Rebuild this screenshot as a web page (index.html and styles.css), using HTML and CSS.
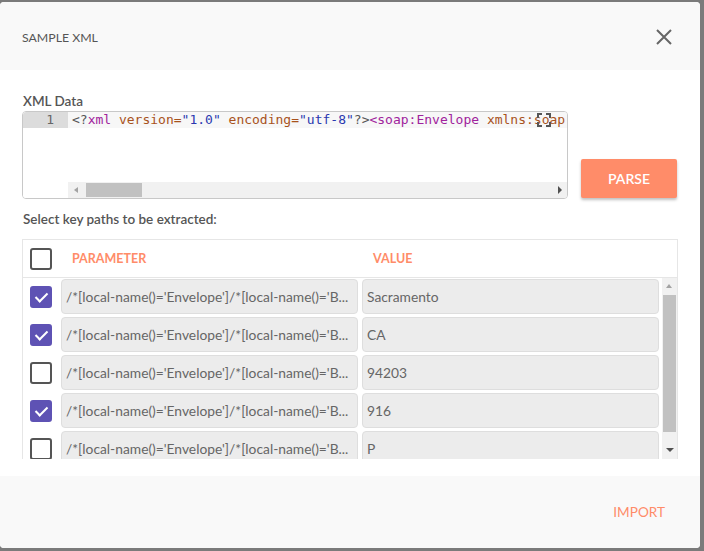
FILE: index.html
```html
<!DOCTYPE html>
<html>
<head>
<meta charset="utf-8">
<link rel="stylesheet" href="styles.css">
</head>
<body>
<div class="modal">
  <div class="modal-header">
    <span class="title">SAMPLE XML</span>
    <svg class="close" width="18" height="18" viewBox="0 0 18 18"><path d="M2 2 L16 16 M16 2 L2 16" stroke="#666" stroke-width="2" fill="none"/></svg>
  </div>
  <div class="modal-body">
    <div class="label">XML Data</div>
    <div class="editor-row">
      <div class="editor">
        <div class="gutter">
          <div class="ln active">1</div>
        </div>
        <div class="code-area">
          <div class="code-line"><span class="br">&lt;?</span><span class="tg">xml</span> <span class="at">version=</span><span class="st">"1.0"</span> <span class="at">encoding=</span><span class="st">"utf-8"</span><span class="br">?&gt;</span><span class="tg">&lt;soap:Envelope</span> <span class="at">xmlns:soap</span></div>
          <svg class="fs" width="14" height="14" viewBox="0 0 14 14"><path d="M1 5V1H5 M9 1H13V5 M13 9V13H9 M5 13H1V9" stroke="#555" stroke-width="2" fill="none"/></svg>
          <div class="hscroll">
            <span class="arr-l"></span>
            <span class="hthumb"></span>
            <span class="arr-r"></span>
          </div>
        </div>
      </div>
      <button class="parse">PARSE</button>
    </div>
    <div class="label label2">Select key paths to be extracted:</div>
    <div class="table">
      <div class="thead">
        <span class="cb"></span>
        <span class="th th-param">PARAMETER</span>
        <span class="th">VALUE</span>
      </div>
      <div class="tbody">
        <div class="rows">
          <div class="row"><span class="cb on"></span><div class="inp">/*[local-name()='Envelope']/*[local-name()='B...</div><div class="inp">Sacramento</div></div>
          <div class="row"><span class="cb on"></span><div class="inp">/*[local-name()='Envelope']/*[local-name()='B...</div><div class="inp">CA</div></div>
          <div class="row"><span class="cb"></span><div class="inp">/*[local-name()='Envelope']/*[local-name()='B...</div><div class="inp">94203</div></div>
          <div class="row"><span class="cb on"></span><div class="inp">/*[local-name()='Envelope']/*[local-name()='B...</div><div class="inp">916</div></div>
          <div class="row"><span class="cb"></span><div class="inp">/*[local-name()='Envelope']/*[local-name()='B...</div><div class="inp">P</div></div>
        </div>
        <div class="vscroll">
          <span class="arr-u"></span>
          <span class="vthumb"></span>
          <span class="arr-d"></span>
        </div>
      </div>
    </div>
  </div>
  <div class="modal-footer">
    <span class="import">IMPORT</span>
  </div>
</div>
</body>
</html>
```
FILE: styles.css
```css
* { box-sizing: border-box; }
html, body { margin: 0; padding: 0; }
body {
  background: #7b7b7b;
  width: 704px;
  height: 551px;
  overflow: hidden;
  font-family: Lato, "Open Sans", sans-serif;
  color: #555;
}
.modal {
  margin-top: 2px;
  width: 700px;
  height: 546px;
  background: #fff;
  border-radius: 4px;
  display: flex;
  flex-direction: column;
  overflow: hidden;
}
.modal-header {
  height: 68px;
  background: #f9f9f9;
  display: flex;
  align-items: center;
  justify-content: space-between;
  padding: 0 27px 0 22px;
  flex: none;
}
.title {
  font-size: 12.3px;
  color: #555;
  margin-top: 2px;
}
.close { margin-top: 1px; }
.modal-body {
  flex: 1;
  padding: 23px 22px 0 22px;
}
.label {
  font-size: 13.5px;
  font-weight: 600;
  color: #555;
  padding-left: 1px;
  line-height: 16px;
  margin-bottom: 2px;
}
.label2 { margin-top: 12px; margin-bottom: 12px; }
.editor-row {
  display: flex;
  align-items: flex-end;
  gap: 13px;
}
.editor {
  width: 546px;
  height: 88px;
  border: 1px solid #c8c8c8;
  border-radius: 4px;
  display: flex;
  overflow: hidden;
}
.gutter {
  width: 45px;
  flex: none;
  background: #fff;
}
.ln {
  height: 16px;
  font-family: "DejaVu Sans Mono", monospace;
  font-size: 13px;
  line-height: 16px;
  color: #666;
  text-align: right;
  padding-right: 14px;
}
.ln.active { background: #dcdcdc; }
.code-area {
  flex: 1;
  position: relative;
  display: flex;
  flex-direction: column;
}
.code-line {
  height: 16px;
  background: #f7f7f7;
  font-family: "DejaVu Sans Mono", monospace;
  font-size: 13px;
  line-height: 16px;
  white-space: pre;
  padding-left: 4px;
  color: #555;
  overflow: hidden;
}
.br { color: #555; }
.tg { color: #a0229c; }
.at { color: #a8521c; }
.st { color: #2a37b0; }
.fs {
  position: absolute;
  top: 1px;
  left: 469px;
}
.hscroll {
  margin-top: auto;
  height: 16px;
  background: #f1f1f1;
  position: relative;
}
.hthumb {
  position: absolute;
  left: 18px;
  top: 1px;
  width: 56px;
  height: 14px;
  background: #c1c1c1;
}
.arr-l {
  position: absolute;
  left: 6px;
  top: 5px;
  border-right: 4px solid #a3a3a3;
  border-top: 3px solid transparent;
  border-bottom: 3px solid transparent;
}
.arr-r {
  position: absolute;
  right: 5px;
  top: 4px;
  border-left: 4px solid #505050;
  border-top: 4px solid transparent;
  border-bottom: 4px solid transparent;
}
.parse {
  width: 96px;
  height: 39px;
  background: #ff8c69;
  border: none;
  border-radius: 2px;
  color: #fff;
  font-family: Lato, "Open Sans", sans-serif;
  font-size: 14px;
  font-weight: 600;
  box-shadow: 0 2px 3px rgba(0,0,0,0.25);
  margin-bottom: 1px;
}
.table {
  width: 656px;
  height: 220px;
  border: 1px solid #e6e6e6;
  border-bottom: none;
  display: flex;
  flex-direction: column;
  overflow: hidden;
}
.thead {
  height: 38px;
  flex: none;
  display: flex;
  align-items: center;
  padding-left: 7px;
  border-bottom: 1px solid #e6e6e6;
}
.th {
  font-size: 12.5px;
  font-weight: 700;
  color: #ff8c69;
}
.th-param { margin-left: 20px; width: 301px; }
.cb {
  width: 22px;
  height: 22px;
  border: 2px solid #555;
  border-radius: 3px;
  flex: none;
  background: #fff;
  position: relative;
}
.cb.on {
  background: #5e52b4;
  border-color: #5e52b4;
}
.cb.on::after {
  content: "";
  position: absolute;
  left: 6px;
  top: 2px;
  width: 5px;
  height: 10px;
  border-right: 2px solid #fff;
  border-bottom: 2px solid #fff;
  transform: rotate(45deg);
}
.tbody {
  flex: 1;
  display: flex;
  overflow: hidden;
}
.rows {
  flex: 1;
  padding: 1px 0 0 7px;
  display: flex;
  flex-direction: column;
  gap: 3px;
}
.row {
  display: flex;
  align-items: center;
  height: 35px;
  flex: none;
}
.row .cb { margin-right: 9px; }
.inp {
  width: 297px;
  height: 35px;
  background: #ececec;
  border: 1px solid #dedede;
  border-radius: 4px;
  font-size: 13.8px;
  color: #666;
  line-height: 33px;
  padding: 0 4px;
  white-space: nowrap;
  overflow: hidden;
  flex: none;
}
.inp + .inp { margin-left: 4px; }
.vscroll {
  width: 15px;
  flex: none;
  background: #f1f1f1;
  position: relative;
}
.vthumb {
  position: absolute;
  left: 1px;
  top: 17px;
  width: 13px;
  height: 137px;
  background: #c1c1c1;
}
.arr-u {
  position: absolute;
  left: 4px;
  top: 6px;
  border-bottom: 4px solid #a3a3a3;
  border-left: 3px solid transparent;
  border-right: 3px solid transparent;
}
.arr-d {
  position: absolute;
  left: 4px;
  bottom: 7px;
  border-top: 4px solid #505050;
  border-left: 4px solid transparent;
  border-right: 4px solid transparent;
}
.modal-footer {
  height: 72px;
  flex: none;
  background: #f9f9f9;
  display: flex;
  align-items: center;
  justify-content: flex-end;
  padding-right: 35px;
}
.import {
  font-size: 13.6px;
  color: #ff8c69;
}
```
